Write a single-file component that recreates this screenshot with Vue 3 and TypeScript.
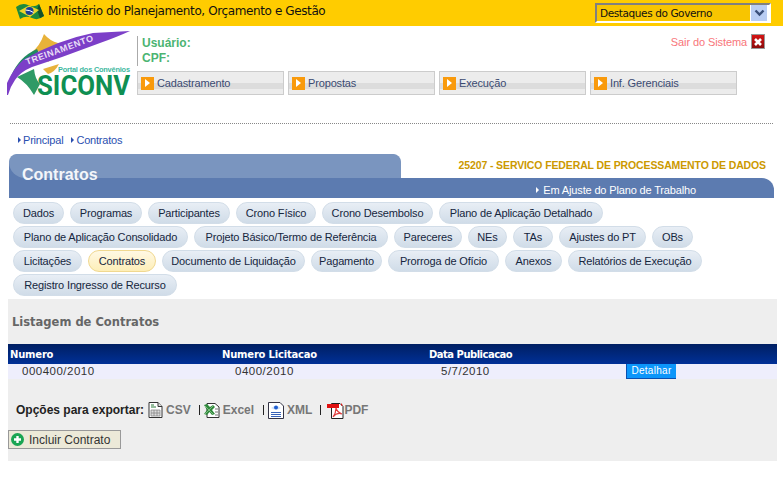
<script setup lang="ts">
const navItems: string[] = ['Cadastramento', 'Propostas', 'Execução', 'Inf. Gerenciais']
const tabs: { label: string; w: number; active?: boolean }[] = [
  { label: 'Dados', w: 51 }, { label: 'Programas', w: 72 }, { label: 'Participantes', w: 82 },
  { label: 'Crono Físico', w: 80 }, { label: 'Crono Desembolso', w: 111 },
  { label: 'Plano de Aplicação Detalhado', w: 164 },
  { label: 'Plano de Aplicação Consolidado', w: 175 }, { label: 'Projeto Básico/Termo de Referência', w: 194 },
  { label: 'Pareceres', w: 68 }, { label: 'NEs', w: 39 }, { label: 'TAs', w: 40 },
  { label: 'Ajustes do PT', w: 87 }, { label: 'OBs', w: 41 },
  { label: 'Licitações', w: 69 }, { label: 'Contratos', w: 68, active: true },
  { label: 'Documento de Liquidação', w: 143 }, { label: 'Pagamento', w: 71 },
  { label: 'Prorroga de Ofício', w: 111 }, { label: 'Anexos', w: 57 },
  { label: 'Relatórios de Execução', w: 134 },
  { label: 'Registro Ingresso de Recurso', w: 164 }
]
</script>

<template>
  <div class="page">
    <header class="topbar">
      <div class="gov">
        <svg class="flag" width="28" height="19" viewBox="0 0 28 19">
          <path d="M0 5 Q6 0 12 3 T23 2 L28 14 Q22 19 16 16 T4 17 Z" fill="#1d8a3c" />
          <path d="M23 2 L28 14 L24 16 L21 8 Z" fill="#14502c" />
          <path d="M3 9 L13 3.5 L23 8 L14 15 Z" fill="#ecd42a" />
          <circle cx="13.5" cy="9" r="4" fill="#1c3f94" />
          <path d="M9.5 8 Q14 8 17.5 10.5" stroke="#fff" stroke-width="1" fill="none" />
        </svg>
        <span class="gov-name">Ministério do Planejamento, Orçamento e Gestão</span>
      </div>
      <div class="select">
        <span class="select-text">Destaques do Governo</span>
        <span class="select-btn">
          <svg width="11" height="8" viewBox="0 0 11 8"><path d="M1.5 1.5 L5.5 5.5 L9.5 1.5" stroke="#3a4f7a" stroke-width="2.4" fill="none" /></svg>
        </span>
      </div>
    </header>

    <section class="masthead">
      <svg class="logo" width="130" height="70" viewBox="0 0 130 70">
        <path d="M24 22 Q33 15 37 3 Q43 10 51 12 Q51 24 41 31 L34 20 Z" fill="#e8b23a" />
        <path d="M36 38 L52 33 Q48 41 41 43 Z" fill="#e8b23a" />
        <path d="M4 45 Q12 26 30 18 L34 27 L10 42 Z" fill="#1f8a60" />
        <path d="M10 46 L27 38 Q28 48 33 53 L27 64 Q20 52 10 46 Z" fill="#2f9a66" />
        <path d="M0 52 Q6 38 16 29 Q50 9 86 2 L123 0 Q110 6 93 12 L55 26 L25 36 Q13 41 8 49 Q3 56 1 64 L0 64 Z" fill="#7c3fc8" />
        <text class="logo-ribbon" transform="translate(20 34) rotate(-20)" textLength="71" lengthAdjust="spacing">TREINAMENTO</text>
        <text class="logo-portal" x="51" y="41" textLength="72" lengthAdjust="spacing">Portal dos Convênios</text>
        <text class="logo-name" x="30" y="64" textLength="93" lengthAdjust="spacingAndGlyphs">SICONV</text>
      </svg>
      <div class="main-head">
        <div class="head-top">
          <div class="user">
            <div>Usuário:</div>
            <div>CPF:</div>
          </div>
          <a class="logout">
            Sair do Sistema
            <span class="x-icon">
              <svg width="10" height="10" viewBox="0 0 10 10"><path d="M2 2 L8 8 M8 2 L2 8" stroke="#fff" stroke-width="2.6" /></svg>
            </span>
          </a>
        </div>
        <nav class="nav">
          <a v-for="item in navItems" :key="item" class="nav-item">
            <span class="nav-icon"><i></i></span>
            <span class="nav-label">{{ item }}</span>
          </a>
        </nav>
      </div>
    </section>

    <div class="rule"></div>

    <div class="crumbs">
      <a class="crumb">Principal</a>
      <a class="crumb">Contratos</a>
    </div>

    <section class="heading">
      <div class="heading-top">
        <div class="heading-tab"><h1>Contratos</h1></div>
        <div class="org">25207 - SERVICO FEDERAL DE PROCESSAMENTO DE DADOS</div>
      </div>
      <div class="heading-bar">
        <span class="status">Em Ajuste do Plano de Trabalho</span>
      </div>
    </section>

    <div class="tabs">
      <a
        v-for="tab in tabs"
        :key="tab.label"
        class="tab"
        :class="{ active: tab.active }"
        :style="{ width: tab.w + 'px' }"
      >{{ tab.label }}</a>
    </div>

    <main class="panel">
      <h2>Listagem de Contratos</h2>
      <table class="grid">
        <thead>
          <tr>
            <th class="c1">Numero</th>
            <th class="c2">Numero Licitacao</th>
            <th class="c3">Data Publicacao</th>
            <th></th>
          </tr>
        </thead>
        <tbody>
          <tr>
            <td class="d1">000400/2010</td>
            <td class="d2">0400/2010</td>
            <td class="d3">5/7/2010</td>
            <td class="d4"><a class="detail">Detalhar</a></td>
          </tr>
        </tbody>
      </table>

      <div class="export">
        <strong>Opções para exportar:</strong>
        <span class="ex ex-csv">
          <svg width="15" height="16" viewBox="0 0 15 16">
            <path d="M1 .5 H10 L14 4.5 V15.5 H1 Z" fill="#fff" stroke="#333" />
            <path d="M10 .5 V4.5 H14" fill="#ddd" stroke="#333" />
            <path d="M3 8 H12 V14 H3 Z M6 8 V14 M9 8 V14 M3 11 H12" fill="#ddd" stroke="#888" stroke-width=".8" />
            <path d="M3 3 H6 M3 5 H8" stroke="#2a7a3a" stroke-width="1.2" />
          </svg>
          CSV
        </span>
        <span class="sep"></span>
        <span class="ex ex-excel">
          <svg width="16" height="16" viewBox="0 0 16 16">
            <path d="M3 1.5 H11 L15 5 V15.5 H3 Z" fill="#fff" stroke="#333" />
            <path d="M11 10 H14 M11 13 H14 M11 7 H14" stroke="#777" />
            <path d="M0 3 L3 2 L6 5 L9 3 L11 5 L8 8 L11 12 L8 13 L5.5 10 L3 13 L0 12 L3 8 Z" fill="#2f8a3c" />
            <path d="M1 4 L9 12 M9 4 L1 12" stroke="#9fd09a" stroke-width=".7" />
          </svg>
          Excel
        </span>
        <span class="sep mid"></span>
        <span class="ex ex-xml">
          <svg width="16" height="17" viewBox="0 0 16 17">
            <path d="M.5 .5 H12 L15.5 4 V16.5 H.5 Z" fill="#fff" stroke="#334" />
            <path d="M3 6 Q8 2 13 6 Q8 9 3 6 Z" fill="#cfe0f8" />
            <circle cx="8" cy="5.5" r="2" fill="#1f5ed0" />
            <path d="M3 10.5 H13 M3 12.5 H13 M3 14.5 H13" stroke="#2050b0" stroke-width=".9" />
          </svg>
          XML
        </span>
        <span class="sep last"></span>
        <span class="ex ex-pdf">
          <svg width="17" height="17" viewBox="0 0 17 17">
            <path d="M4.5 1.5 H13 L16 4.5 V16.5 H4.5 Z" fill="#fff" stroke="#222" />
            <path d="M0 2 H12 V6 H0 Z" fill="#e01010" />
            <path d="M14 1 L16 3.5 H14 Z" fill="#e01010" />
            <path d="M9 6 Q9 11 6 15 Q10 10 15 12 Q10 10 9 6 Z" fill="none" stroke="#e04040" stroke-width="1.2" />
          </svg>PDF
        </span>
      </div>

      <button class="add" type="button">
        <svg width="13" height="13" viewBox="0 0 13 13">
          <circle cx="6.5" cy="6.5" r="6.5" fill="#1aa552" />
          <path d="M6.5 3 V10 M3 6.5 H10" stroke="#fff" stroke-width="2.4" />
        </svg>
        <span>Incluir Contrato</span>
      </button>
    </main>
  </div>
</template>

<style>
html, body { margin: 0; background: #fff; }
</style>

<style scoped>
.page {
  width: 783px;
  height: 477px;
  overflow: hidden;
  font-family: "Liberation Sans", Arial, sans-serif;
  font-size: 11px;
  background: #fff;
}
.topbar {
  height: 26px;
  background: #fc0;
  display: flex;
  justify-content: space-between;
  align-items: flex-start;
  padding: 0 12px 0 16px;
  box-sizing: border-box;
}
.gov { display: flex; align-items: center; gap: 4px; height: 22px; }
.flag { display: block; }
.gov-name {
  font-family: "DejaVu Sans", Verdana, sans-serif;
  font-size: 12px;
  letter-spacing: -0.39px;
  color: #111;
}
.select {
  margin-top: 3px;
  width: 176px;
  height: 20px;
  box-sizing: border-box;
  border: 2px solid #fff;
  border-top-color: #808080;
  border-left-color: #808080;
  background: #f8c500;
  display: flex;
  justify-content: space-between;
  padding-left: 3px;
  font-family: "DejaVu Sans", sans-serif;
  color: #111;
}
.select-text { font-size: 10.5px; line-height: 16px; white-space: nowrap; letter-spacing: -0.4px; }
.select-btn {
  width: 16px;
  background: #b9cdf3;
  border-left: 1px solid #fff;
  border-right: 2px solid #fff;
  display: flex;
  align-items: center;
  justify-content: center;
}

.masthead {
  height: 97px;
  display: flex;
  padding: 5px 0 0 7px;
  box-sizing: border-box;
}
.logo { display: block; flex: none; }
.logo-ribbon { font: bold 9px "Liberation Sans", sans-serif; fill: #e8dcf6; }
.logo-portal { font: bold 7.4px "Liberation Sans", sans-serif; fill: #3db8a0; }
.logo-name { font: bold 27px "Roboto", "Liberation Sans", sans-serif; fill: #0f8f52; }
.main-head { flex: 1; display: flex; flex-direction: column; min-width: 0; }
.head-top {
  display: flex;
  justify-content: space-between;
  height: 35px;
  padding-top: 0;
}
.user {
  border-left: 1px solid #aaa;
  height: 30px;
  padding-left: 4px;
  color: #4cb472;
  font: bold 12px/15px "Liberation Sans", sans-serif;
  box-sizing: border-box;
}
.head-top { padding-top: 5px; }
.logout {
  display: flex;
  align-items: flex-start;
  gap: 4px;
  margin: -2px 18px 0 0;
  color: #f8767a;
  line-height: 16px;
  font-size: 11px;
  letter-spacing: -0.1px;
}
.x-icon {
  width: 14px;
  height: 15px;
  box-sizing: border-box;
  border: 1px solid #999;
  background: linear-gradient(#d61414, #8a0c0c);
  display: flex;
  align-items: center;
  justify-content: center;
}
.nav { display: flex; gap: 4px; }
.nav-item {
  width: 147px;
  height: 24px;
  box-sizing: border-box;
  border: 1px solid #ccc;
  background: linear-gradient(#ececec 0, #ececec 11px, #dcdcdc 11px, #dcdcdc 17px, #ececec 17px);
  display: flex;
  align-items: center;
  padding-left: 3px;
  gap: 3px;
  color: #3a4a72;
  font-size: 11px;
  letter-spacing: -0.15px;
}
.nav-icon {
  width: 13px;
  height: 13px;
  background: #f99a0c;
  display: flex;
  align-items: center;
  justify-content: center;
}
.nav-icon i {
  width: 0;
  height: 0;
  border-left: 5px solid #fff;
  border-top: 4px solid transparent;
  border-bottom: 4px solid transparent;
}

.rule { margin-left: 10px; width: 763px; border-top: 1px dotted #888; }

.crumbs {
  height: 30px;
  box-sizing: border-box;
  padding: 9px 0 0 18px;
  display: flex;
  align-items: flex-start;
  gap: 8px;
  line-height: 14px;
  color: #2a4fb0;
  letter-spacing: -0.2px;
}
.crumb { display: flex; align-items: center; gap: 2px; }
.crumb::before {
  content: "";
  border-left: 3px solid #2a4fb0;
  border-top: 3px solid transparent;
  border-bottom: 3px solid transparent;
}

.heading { margin-left: 9px; width: 765px; }
.heading-top { display: flex; height: 24px; }
.heading-tab {
  position: relative;
  width: 392px;
  background: #5c7bb0;
  border-radius: 10px 10px 0 0;
  box-sizing: border-box;
  padding-left: 13px;
}
.heading-tab::before {
  content: "";
  position: absolute;
  inset: 0;
  background: #7a95bf;
  border-radius: 10px 10px 0 20px;
}
.heading-tab h1 {
  margin: 11px 0 0;
  font: bold 16px/20px "Liberation Sans", sans-serif;
  color: #f4f6fa;
  position: relative;
  z-index: 1;
}
.org {
  flex: 1;
  text-align: right;
  padding: 4px 8px 0 0;
  font: bold 10.5px/14px "Liberation Sans", sans-serif;
  letter-spacing: -0.12px;
  color: #cc9900;
  white-space: nowrap;
}
.heading-bar {
  height: 20px;
  background: #5c7bb0;
  border-radius: 0 12px 0 0;
  display: flex;
  align-items: flex-end;
  justify-content: flex-end;
  padding-right: 78px;
  color: #fff;
  line-height: 16px;
  letter-spacing: -0.15px;
}
.status { display: flex; align-items: center; gap: 4px; }
.status::before {
  content: "";
  border-left: 3px solid #fff;
  border-top: 3px solid transparent;
  border-bottom: 3px solid transparent;
}

.tabs {
  display: flex;
  flex-wrap: wrap;
  gap: 2px 6px;
  padding: 4px 0 0 13px;
  width: 740px;
  height: 97px;
  align-content: flex-start;
}
.tab {
  height: 22px;
  box-sizing: border-box;
  border: 1px solid #d2dde8;
  border-radius: 11px;
  background: linear-gradient(#e8eef5, #d0dce8);
  color: #16263e;
  line-height: 20px;
  text-align: center;
  white-space: nowrap;
  font-size: 11px;
  letter-spacing: -0.15px;
}
.tab.active {
  border-color: #f0d890;
  background: linear-gradient(#fff8e4, #fdeeb8);
}

.panel {
  margin-left: 8px;
  width: 769px;
  height: 162px;
  background: #eee;
  box-sizing: border-box;
  padding-top: 16px;
}
.panel h2 {
  margin: 0 0 0 4px;
  font: bold 11.5px/15px "DejaVu Sans", Verdana, sans-serif;
  color: #666;
}
.grid {
  margin-top: 14px;
  width: 100%;
  border-collapse: collapse;
  table-layout: fixed;
}
.grid th {
  height: 20px;
  padding: 0;
  background: linear-gradient(#001f62, #003097);
  color: #fff;
  text-align: left;
  font: bold 10px "DejaVu Sans", Verdana, sans-serif;
  letter-spacing: -0.2px;
}
.grid th.c3 { letter-spacing: -0.5px; }
.grid td { height: 15px; padding: 0; background: #eeeefc; color: #333; line-height: 14px; font-size: 11.5px; letter-spacing: 0.5px; vertical-align: top; }
.c1 { width: 214px; padding-left: 2px !important; box-sizing: border-box; }
.c2 { width: 207px; }
.c3 { width: 197px; }
.d1 { padding-left: 14px !important; }
.d2 { padding-left: 13px !important; }
.d3 { padding-left: 12px !important; }
.detail {
  display: block;
  width: 50px;
  height: 15px;
  box-sizing: border-box;
  background: #0c96fa;
  border-bottom: 1px solid #0a4fb0;
  border-left: 1px solid #0a4fb0;
  color: #fff;
  font-size: 10px;
  line-height: 14px;
  letter-spacing: 0.3px;
  text-align: center;
}
.export {
  margin: 21px 0 0 8px;
  height: 20px;
  display: flex;
  align-items: center;
  font-weight: bold;
  font-size: 12px;
  color: #222;
}
.export strong { margin-right: 4px; }
.ex { display: flex; align-items: center; gap: 3px; color: #777; }
.ex-pdf { gap: 0; }
.sep { width: 1px; height: 10px; background: #222; margin: 0 4px 0 8px; }
.sep.mid { margin-left: 9px; }
.sep.last { margin-right: 6px; }
.add {
  display: flex;
  align-items: center;
  margin-top: 10px;
  width: 113px;
  height: 19px;
  box-sizing: border-box;
  padding: 0 0 0 2px;
  border: 1px solid #999;
  background: #ece9d8;
  font: 12px "Liberation Sans", sans-serif;
  color: #333;
  gap: 5px;
}
</style>
